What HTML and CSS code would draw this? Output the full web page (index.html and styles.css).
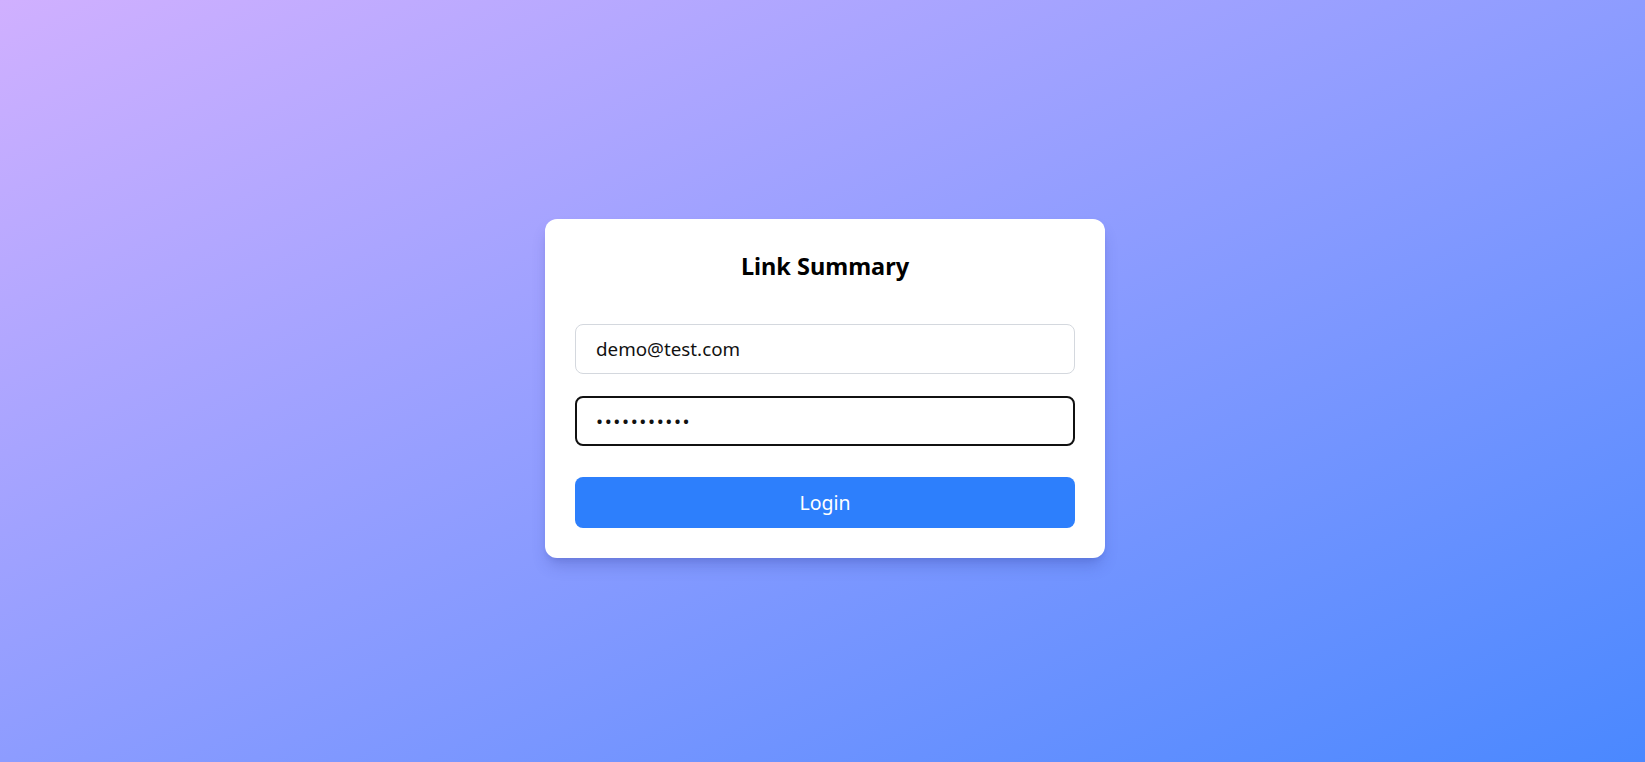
FILE: index.html
```html
<!DOCTYPE html>
<html lang="en">
<head>
<meta charset="utf-8">
<title>Link Summary</title>
<link rel="stylesheet" href="styles.css">
</head>
<body>
<main class="page">
  <form class="card">
    <h1 class="title">Link Summary</h1>
    <input class="field" type="email" value="demo@test.com">
    <input class="field field-focus" type="password" value="password123">
    <button class="btn" type="button">Login</button>
  </form>
</main>
</body>
</html>
```
FILE: styles.css
```css
* { box-sizing: border-box; }
html, body { margin: 0; height: 100%; }
body {
  font-family: "Noto Sans", "Open Sans", sans-serif;
  background: linear-gradient(to bottom right, #d0b0ff, #4a88ff);
}
.page {
  min-height: 100%;
  display: flex;
  align-items: center;
  justify-content: center;
  padding: 14px 0 0 5px;
}
.card {
  width: 560px;
  background: #fff;
  border-radius: 12px;
  padding: 31px 30px 30px;
  box-shadow: 0 10px 15px -3px rgba(40, 50, 140, 0.25), 0 4px 6px -4px rgba(40, 50, 140, 0.2);
  display: flex;
  flex-direction: column;
}
.title {
  margin: 0 0 42px;
  font-size: 23.5px;
  line-height: 32px;
  font-weight: 700;
  text-align: center;
  color: #000;
}
.field {
  height: 50px;
  width: 100%;
  border: 1px solid #d4d8de;
  border-radius: 8px;
  padding: 0 20px;
  font-family: inherit;
  font-size: 18.8px;
  color: #111;
  background: #fff;
  outline: none;
}
.field + .field { margin-top: 22px; }
.field-focus {
  border: 2px solid #111;
  padding: 0 19px;
  letter-spacing: 1.6px;
}
.btn {
  margin-top: 31px;
  height: 51px;
  border: none;
  border-radius: 8px;
  background: #2d7ffc;
  color: #fff;
  font-family: inherit;
  font-size: 19.5px;
  cursor: pointer;
}
```
